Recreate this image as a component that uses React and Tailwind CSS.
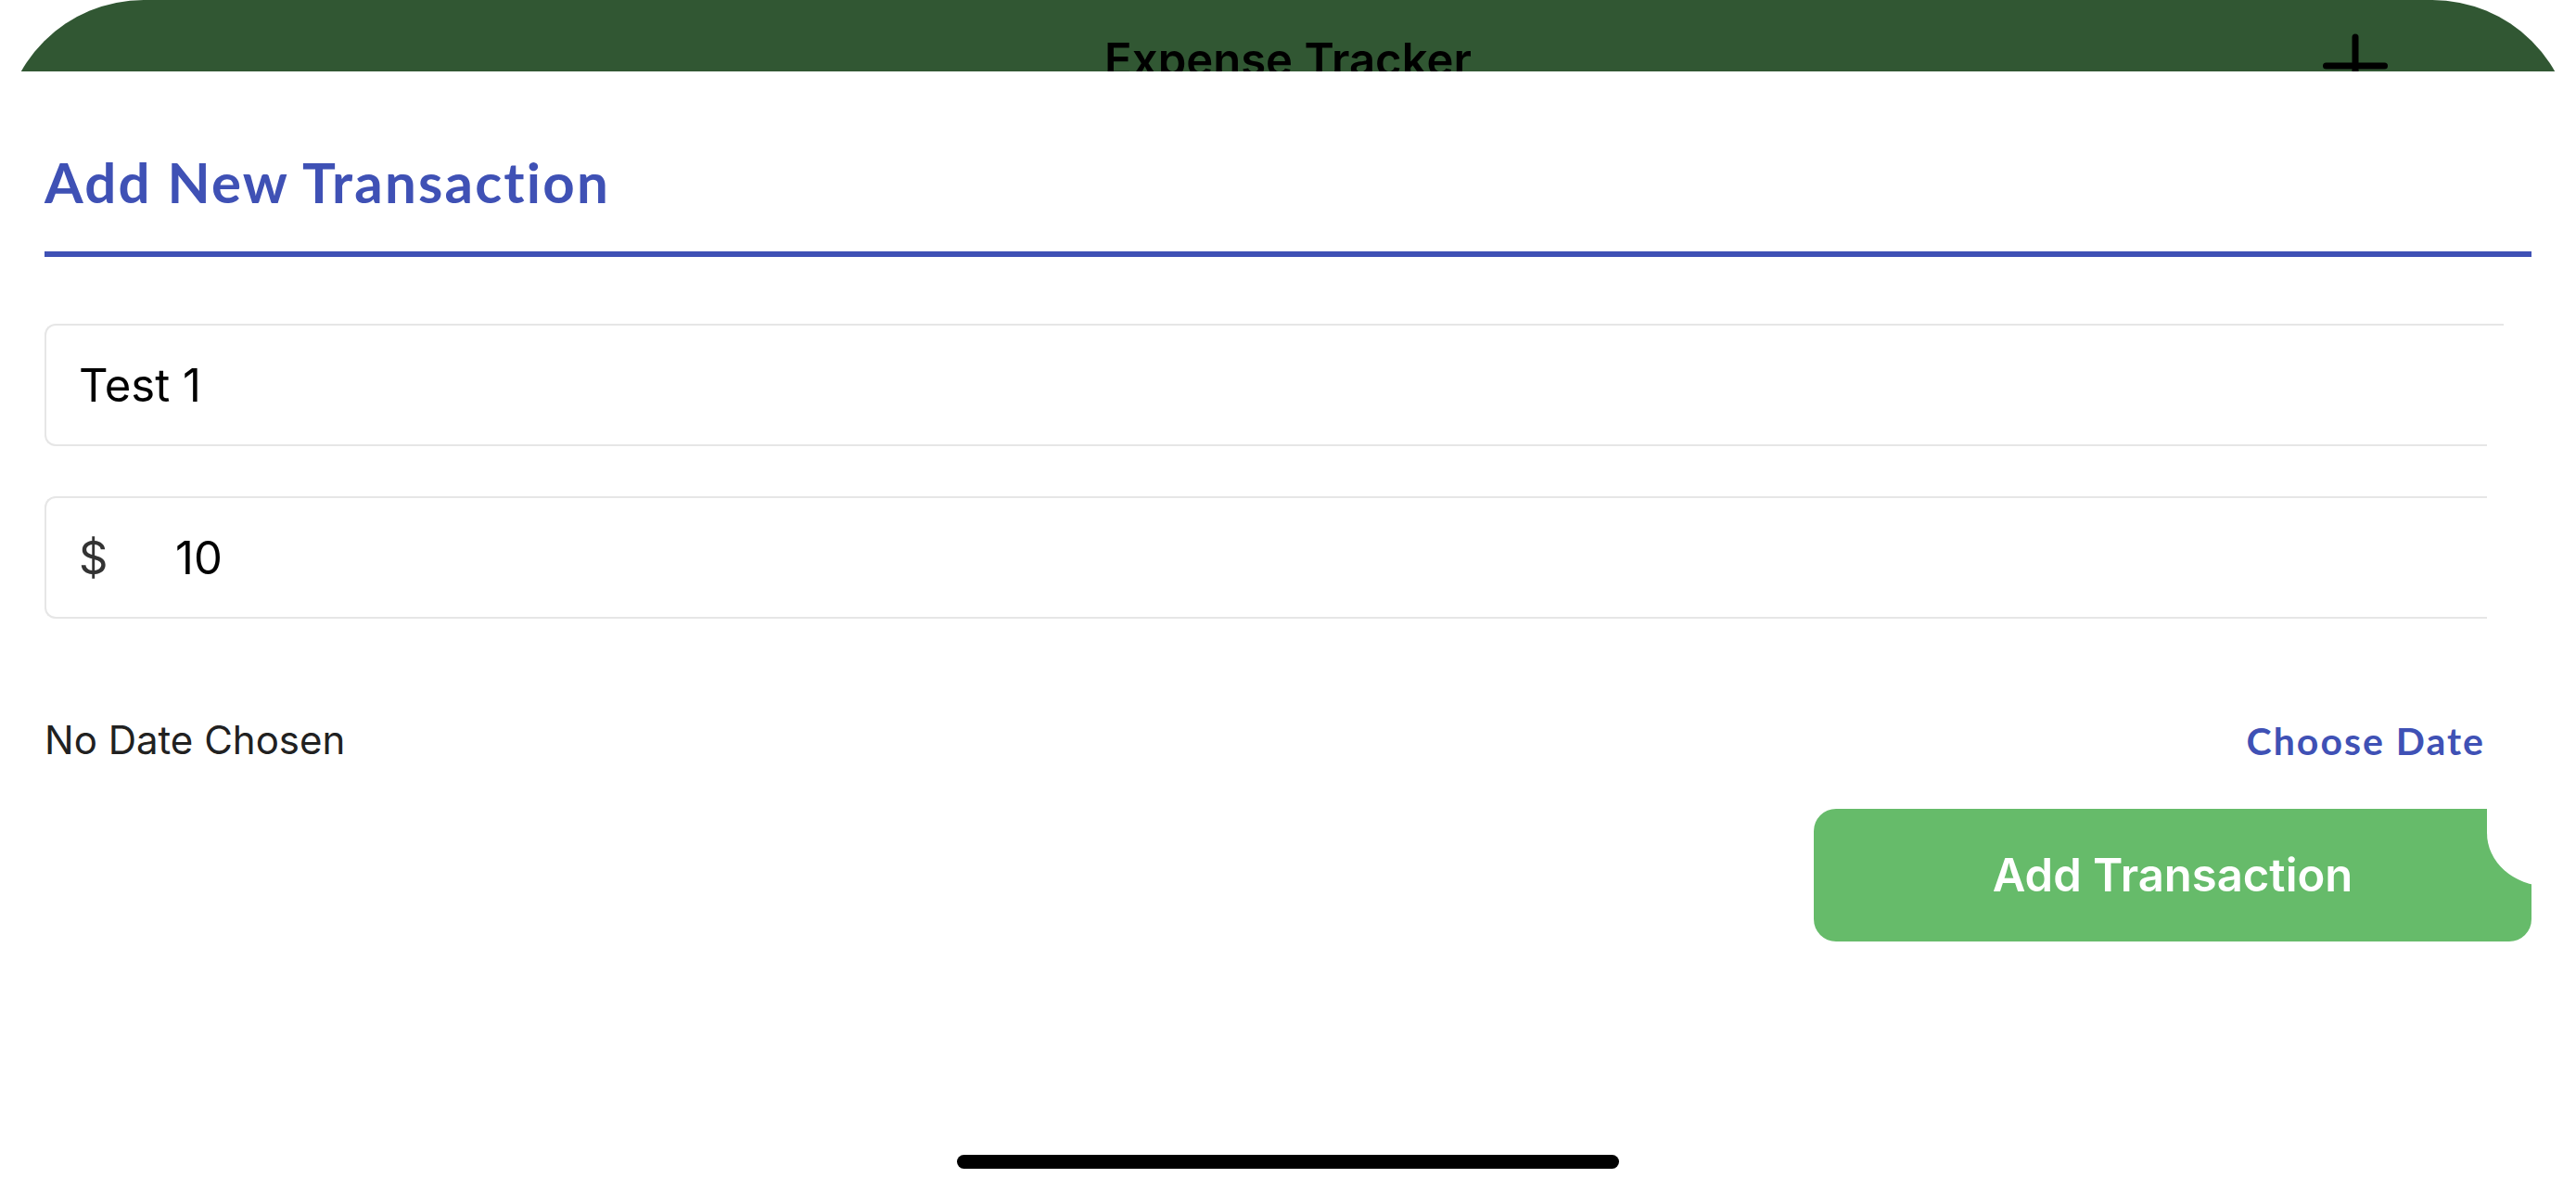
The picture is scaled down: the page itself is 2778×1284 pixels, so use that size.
import React from "react";

export default function App() {
  return (
    <div className="relative flex h-[1284px] w-[2778px] flex-col overflow-hidden bg-white font-['Inter',sans-serif]">
      {/* app bar peeking behind the sheet */}
      <header className="h-[77px] shrink-0 overflow-hidden px-[3px]">
        <div className="grid h-[320px] grid-cols-[1fr_auto_1fr] items-start rounded-[152px] bg-[#315733] pt-[40px]">
          <div />
          <h1 className="text-[49px] font-semibold leading-none text-black">Expense Tracker</h1>
          <div className="-mt-[4px] flex justify-end">
            <div className="mr-[200px]">
              <svg width="70" height="70" viewBox="0 0 70 70" fill="none" stroke="black" strokeWidth="7" strokeLinecap="round">
                <line x1="35" y1="4" x2="35" y2="66" />
                <line x1="3.5" y1="35" x2="66.5" y2="35" />
              </svg>
            </div>
          </div>
        </div>
      </header>

      {/* bottom sheet */}
      <main className="relative flex flex-1 flex-col px-[48px]">
        <h2 className="mt-[89px] font-['Lato',sans-serif] text-[60px] font-bold leading-none tracking-[2.2px] text-[#3F51B5]">
          Add New Transaction
        </h2>
        <div className="mt-[45px] h-[6px] bg-[#3F51B5]" />

        <div className="mr-[30px] mt-[72px] flex h-[132px] items-center rounded-l-[12px] border-2 border-r-0 border-[#e6e6e6] pl-[35px] text-[49px] leading-none text-black">
          Test 1
        </div>

        <div className="mr-[30px] mt-[54px] flex h-[132px] items-center rounded-l-[12px] border-2 border-r-0 border-[#e6e6e6] pl-[35px] text-[49px] leading-none">
          <span className="w-[104px] text-[#333333]">$</span>
          <span className="text-black">10</span>
        </div>

        <div className="mt-[110px] flex h-[42px] items-center justify-between pr-[50px]">
          <span className="text-[42px] leading-none text-[#212121]">No Date Chosen</span>
          <span className="font-['Lato',sans-serif] text-[41px] font-bold leading-none tracking-[2px] text-[#3F51B5]">
            Choose Date
          </span>
        </div>

        <button className="mt-[53px] flex h-[143px] w-[774px] items-center justify-center self-end rounded-[24px] bg-[#66BB6A] text-[49px] font-semibold leading-none text-white">
          Add Transaction
        </button>

        {/* white panel clipping the right edge */}
        <div className="absolute left-[2682px] right-0 top-[274px] h-[604px] rounded-bl-[64px_57px] bg-white" />

        <div className="mt-auto flex justify-center pb-[24px]">
          <div className="h-[15px] w-[714px] rounded-full bg-black" />
        </div>
      </main>
    </div>
  );
}
